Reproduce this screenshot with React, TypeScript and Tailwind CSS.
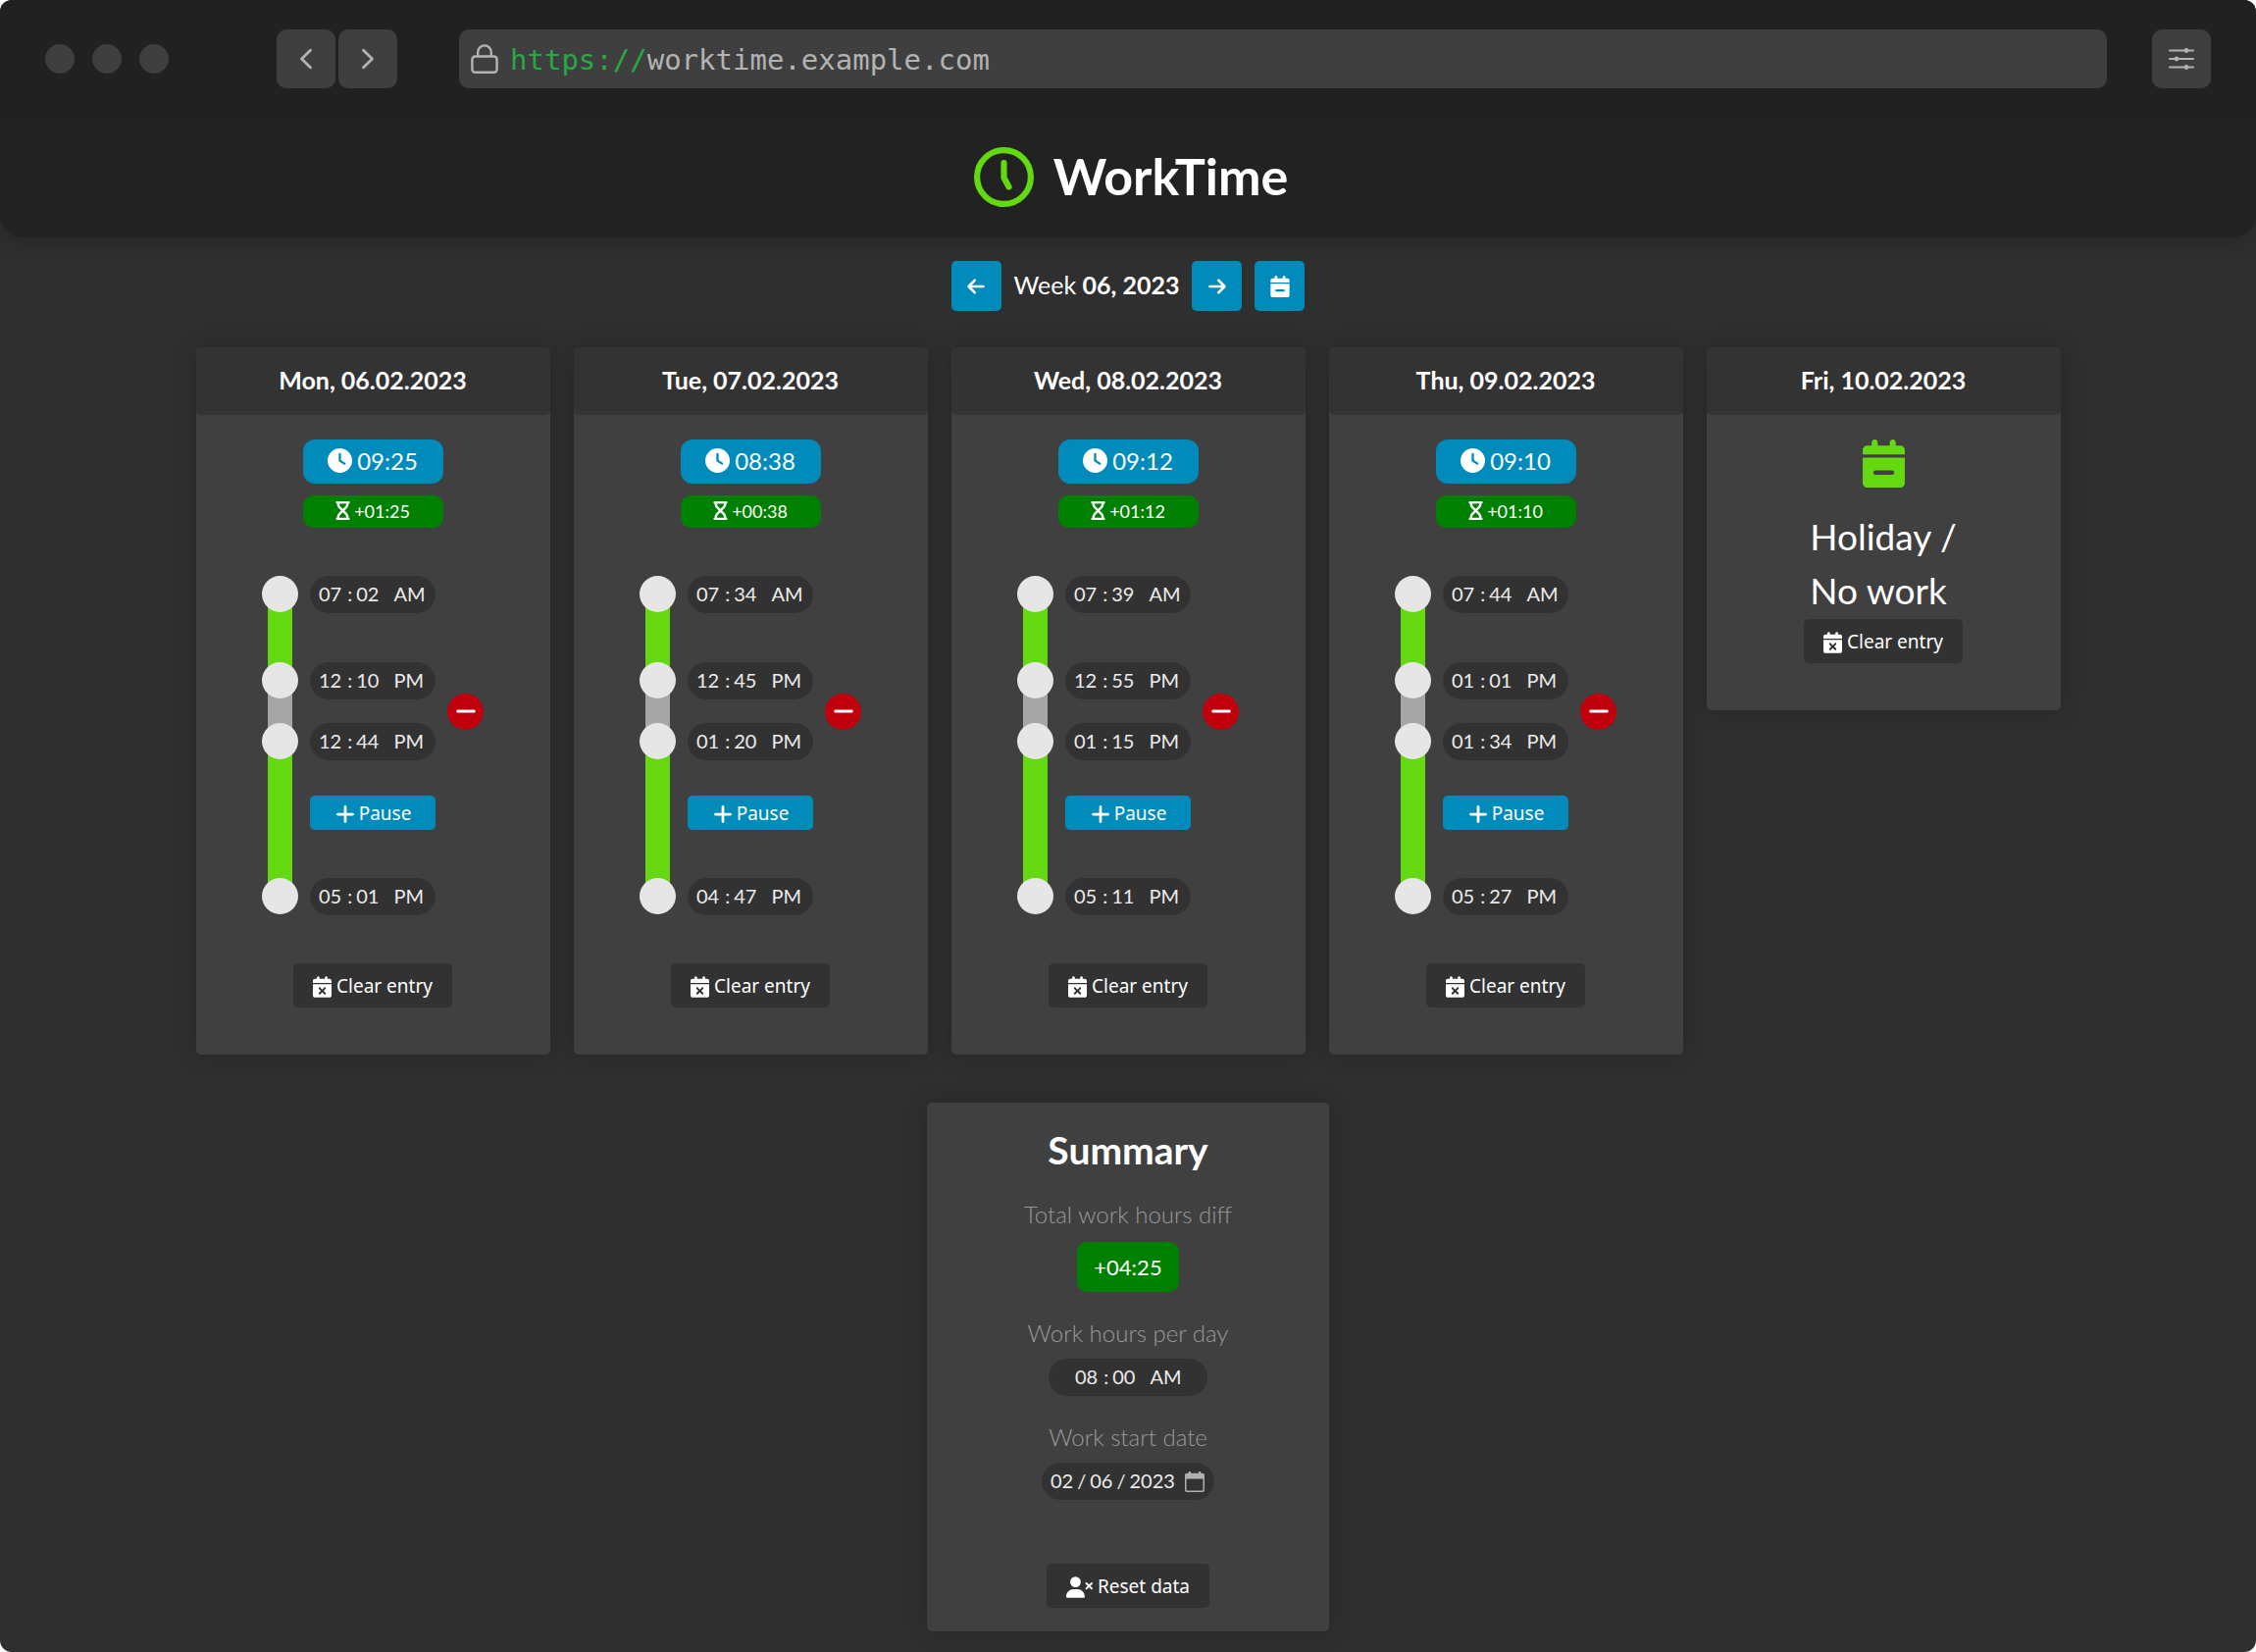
import type { ReactNode } from "react";
import {
  FaArrowLeft,
  FaArrowRight,
  FaCalendarMinus,
  FaCalendarXmark,
  FaClock,
  FaHourglass,
  FaMinus,
  FaPlus,
  FaUserXmark,
} from "react-icons/fa6";

type WorkDay = {
  date: string;
  total: string;
  diff: string;
  start: string;
  pauseStart: string;
  pauseEnd: string;
  end: string;
};

const days: WorkDay[] = [
  { date: "Mon, 06.02.2023", total: "09:25", diff: "+01:25", start: "07:02", pauseStart: "12:10", pauseEnd: "12:44", end: "17:01" },
  { date: "Tue, 07.02.2023", total: "08:38", diff: "+00:38", start: "07:34", pauseStart: "12:45", pauseEnd: "13:20", end: "16:47" },
  { date: "Wed, 08.02.2023", total: "09:12", diff: "+01:12", start: "07:39", pauseStart: "12:55", pauseEnd: "13:15", end: "17:11" },
  { date: "Thu, 09.02.2023", total: "09:10", diff: "+01:10", start: "07:44", pauseStart: "13:01", pauseEnd: "13:34", end: "17:27" },
];

const timeFields =
  "[&::-webkit-calendar-picker-indicator]:hidden [&::-webkit-datetime-edit-hour-field]:pr-1.5 [&::-webkit-datetime-edit-minute-field]:px-1 [&::-webkit-datetime-edit-ampm-field]:pl-1.5";

const dateFields =
  "[&::-webkit-calendar-picker-indicator]:hidden [&::-webkit-datetime-edit-month-field]:pr-1 [&::-webkit-datetime-edit-day-field]:px-1 [&::-webkit-datetime-edit-year-field]:pl-1";

function BrowserBar() {
  return (
    <div className="relative z-10 flex h-[120px] items-center bg-[#212121] px-[46px]">
      <div className="flex gap-[18px]">
        <span className="size-[30px] rounded-full bg-[#3f3f3f]" />
        <span className="size-[30px] rounded-full bg-[#3f3f3f]" />
        <span className="size-[30px] rounded-full bg-[#3f3f3f]" />
      </div>
      <div className="ml-[110px] flex gap-[3px]">
        <button aria-label="Back" className="flex size-[60px] items-center justify-center rounded-[10px] bg-[#3f3f3f]">
          <svg width="20" height="26" viewBox="0 0 20 26" fill="none" stroke="#b3b3b3" strokeWidth="2.8" strokeLinecap="round" strokeLinejoin="round">
            <path d="M14.5 4.2 5.5 13l9 8.8" />
          </svg>
        </button>
        <button aria-label="Forward" className="flex size-[60px] items-center justify-center rounded-[10px] bg-[#3f3f3f]">
          <svg width="20" height="26" viewBox="0 0 20 26" fill="none" stroke="#b3b3b3" strokeWidth="2.8" strokeLinecap="round" strokeLinejoin="round">
            <path d="m5.5 4.2 9 8.8-9 8.8" />
          </svg>
        </button>
      </div>
      <label className="ml-[63px] flex h-[60px] flex-1 items-center rounded-[10px] bg-[#3f3f3f] pl-3 font-['DejaVu_Sans_Mono',monospace] text-[29px] text-[#b3b3b3]">
        <svg width="28" height="30" viewBox="0 0 28 30" fill="none" stroke="#b3b3b3" strokeWidth="2.4" aria-hidden="true">
          <rect x="1.4" y="12.5" width="25.2" height="16.2" rx="3" />
          <path d="M7.2 12.5V8.2a6.8 6.8 0 0 1 13.6 0v4.3" />
        </svg>
        <span className="ml-3 pt-1 text-[#27a844]">https://</span>
        <input aria-label="Address" defaultValue="worktime.example.com" className="min-w-0 flex-1 bg-transparent pt-1 outline-none" />
      </label>
      <button aria-label="Settings" className="ml-[46px] flex size-[60px] items-center justify-center rounded-[10px] bg-[#3f3f3f]">
        <svg width="26" height="22" viewBox="0 0 26 22" stroke="#b3b3b3" strokeWidth="2" strokeLinecap="round" fill="#b3b3b3">
          <path d="M1 2.5h24M1 11h24M1 19.5h24" />
          <circle cx="18" cy="2.5" r="1.4" />
          <circle cx="8" cy="11" r="1.4" />
          <circle cx="18" cy="19.5" r="1.4" />
        </svg>
      </button>
    </div>
  );
}

function SquareButton({ label, children }: { label: string; children: ReactNode }) {
  return (
    <button aria-label={label} className="flex size-[51px] items-center justify-center rounded-[5px] bg-[#008bba] text-xl">
      {children}
    </button>
  );
}

function DarkButton({ icon, children }: { icon: ReactNode; children: ReactNode }) {
  return (
    <button className="flex h-[45px] items-center gap-[5px] rounded-[5px] bg-[#323232] px-5 pt-0.5 font-['Noto_Sans',sans-serif] text-[19px] whitespace-nowrap">
      {icon}
      {children}
    </button>
  );
}

function ClearButton() {
  return <DarkButton icon={<FaCalendarXmark className="h-[22px] w-[19px]" />}>Clear entry</DarkButton>;
}

function TimeInput({ label, value }: { label: string; value: string }) {
  return (
    <input
      type="time"
      aria-label={label}
      defaultValue={value}
      className={`h-[38px] w-32 rounded-full bg-[#323232] pr-1 pb-0.5 pl-2 text-xl text-[#ececec] outline-none ${timeFields}`}
    />
  );
}

function Card({ title, children }: { title: string; children: ReactNode }) {
  return (
    <section className="flex flex-col items-center rounded-[5px] bg-[#404040] pb-12 shadow-[0_0_24px_rgba(0,0,0,0.2)]">
      <h2 className="mb-[25px] flex h-[69px] w-full items-center justify-center rounded-[5px] bg-[#333333] pb-0.5 text-[25px] font-bold">
        {title}
      </h2>
      {children}
    </section>
  );
}

function Dot() {
  return <span className="relative z-10 size-[37px] shrink-0 rounded-full bg-[#e6e6e6]" />;
}

function DayCard({ day }: { day: WorkDay }) {
  return (
    <Card title={day.date}>
      <div className="flex w-[143px] flex-col gap-3">
        <div className="flex h-[45px] items-center justify-center gap-[5px] rounded-xl bg-[#008bba] pb-0.5 text-2xl">
          <FaClock className="size-[25px]" />
          {day.total}
        </div>
        <div className="flex h-[33px] items-center justify-center gap-1 rounded-[10px] bg-[#008000] pb-0.5 text-lg">
          <FaHourglass className="h-[19px] w-[15px]" />
          {day.diff}
        </div>
      </div>
      <div className="my-[49px] flex gap-3">
        <div className="flex flex-col items-center">
          <Dot />
          <span className="-my-2 h-[67px] w-[25px] bg-[#64d912]" />
          <Dot />
          <span className="-my-2 h-[41px] w-[25px] bg-[#a6a6a6]" />
          <Dot />
          <span className="-my-2 h-[137px] w-[25px] bg-[#64d912]" />
          <Dot />
        </div>
        <div className="flex flex-col items-start">
          <TimeInput label="Start" value={day.start} />
          <div className="mt-[50px] flex items-center gap-3">
            <div className="flex flex-col gap-6">
              <TimeInput label="Pause start" value={day.pauseStart} />
              <TimeInput label="Pause end" value={day.pauseEnd} />
            </div>
            <button aria-label="Remove pause" className="flex size-[37px] items-center justify-center rounded-full bg-[#c0000c] text-2xl">
              <FaMinus />
            </button>
          </div>
          <button className="mt-9 mb-[49px] flex h-[35px] w-32 items-center justify-center gap-[3px] rounded-[5px] bg-[#008bba] pt-0.5 font-['Noto_Sans',sans-serif] text-[19px]">
            <FaPlus className="size-[22px]" />
            Pause
          </button>
          <TimeInput label="End" value={day.end} />
        </div>
      </div>
      <ClearButton />
    </Card>
  );
}

function Summary() {
  return (
    <section className="mx-auto mt-[49px] flex w-[410px] flex-col items-center rounded-[5px] bg-[#404040] pt-6 pb-6 shadow-[0_0_24px_rgba(0,0,0,0.2)]">
      <h2 className="text-[39px] leading-[48px] font-bold">Summary</h2>
      <p className="mt-6 text-2xl leading-9 font-light text-[#999999]">Total work hours diff</p>
      <output className="mt-[10px] flex h-[51px] w-[104px] items-center justify-center rounded-[10px] bg-[#008000] text-[22px]">
        +04:25
      </output>
      <label htmlFor="hours-per-day" className="mt-6 text-2xl leading-9 font-light text-[#999999]">
        Work hours per day
      </label>
      <input
        id="hours-per-day"
        type="time"
        defaultValue="08:00"
        className={`mt-2 h-[38px] w-[162px] rounded-full bg-[#323232] pr-2 pb-0.5 pl-[26px] text-xl text-[#ececec] outline-none ${timeFields}`}
      />
      <label htmlFor="start-date" className="mt-6 text-2xl leading-9 font-light text-[#999999]">
        Work start date
      </label>
      <div className="mt-2 flex h-[38px] w-[176px] items-center rounded-full bg-[#323232] pr-[10px] pl-2">
        <input
          id="start-date"
          type="date"
          defaultValue="2023-02-06"
          className={`min-w-0 flex-1 bg-transparent pb-0.5 text-xl text-[#ececec] outline-none ${dateFields}`}
        />
        <svg width="20" height="21" viewBox="0 0 20 21" fill="#b0b0b0" aria-hidden="true">
          <path d="M3.800 0h2.200v1.800h8V0h2.200v1.800H18a2 2 0 0 1 2 2V19a2 2 0 0 1-2 2H2a2 2 0 0 1-2-2V3.800a2 2 0 0 1 2-2h1.800ZM1.500 7.500V18.500a1 1 0 0 0 1 1h15a1 1 0 0 0 1-1V7.500Z" fillRule="evenodd" />
        </svg>
      </div>
      <div className="mt-[65px]">
        <DarkButton icon={<FaUserXmark className="h-[22px] w-[27px]" />}>Reset data</DarkButton>
      </div>
    </section>
  );
}

export default function App() {
  return (
    <div className="bg-white">
      <div className="min-h-screen overflow-hidden rounded-[12px] bg-[#2f2f2f] pb-[21px] font-['Lato',sans-serif] text-white">
        <BrowserBar />
        <header className="flex h-[122px] items-center justify-center gap-5 rounded-b-3xl bg-[#222222] pb-0.5 pl-1.5 shadow-[0_0_24px_rgba(0,0,0,0.3)]">
          <svg width="61" height="61" viewBox="0 0 61 61" fill="none" stroke="#64d912" strokeWidth="6.2" strokeLinecap="round" strokeLinejoin="round" aria-hidden="true">
            <circle cx="30.5" cy="30.5" r="27.4" />
            <path d="M30.5 16v15l5 9.5" />
          </svg>
          <h1 className="pb-0.5 text-[52px] leading-none font-bold">WorkTime</h1>
        </header>
        <main>
          <nav aria-label="Week" className="mt-6 flex items-center justify-center gap-[13px]">
            <SquareButton label="Previous week">
              <FaArrowLeft />
            </SquareButton>
            <p className="pb-0.5 text-[25px]">
              Week <b>06, 2023</b>
            </p>
            <SquareButton label="Next week">
              <FaArrowRight />
            </SquareButton>
            <SquareButton label="Current week">
              <FaCalendarMinus className="size-[22px]" />
            </SquareButton>
          </nav>
          <div className="mt-[37px] grid grid-cols-[repeat(auto-fit,361px)] items-start justify-center gap-6 px-6">
            {days.map((day) => (
              <DayCard key={day.date} day={day} />
            ))}
            <Card title="Fri, 10.02.2023">
              <FaCalendarMinus className="text-[49px] text-[#64d912]" />
              <p className="mt-[22px] mb-0.5 text-[37px] leading-[55px]">
                Holiday /<br />
                No work
              </p>
              <ClearButton />
            </Card>
          </div>
          <Summary />
        </main>
      </div>
    </div>
  );
}
